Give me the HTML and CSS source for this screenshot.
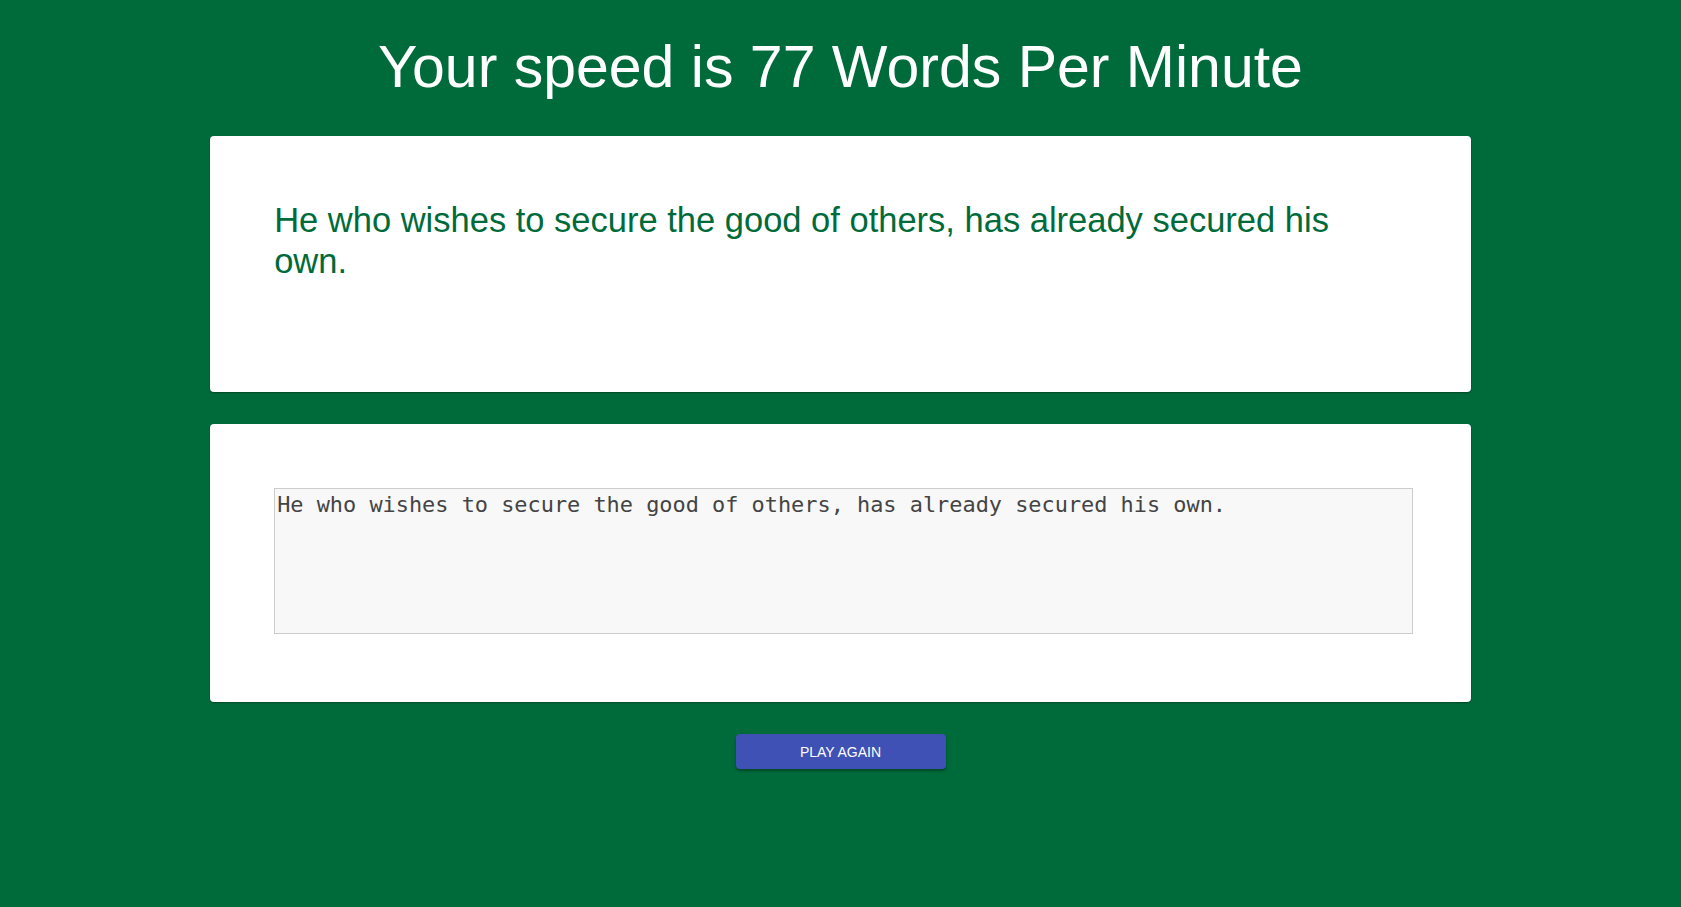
FILE: index.html
```html
<!DOCTYPE html>
<html>
<head>
<meta charset="utf-8">
<title>Typing Speed</title>
<link rel="stylesheet" href="styles.css">
</head>
<body>
<h1 class="title">Your speed is 77 Words Per Minute</h1>
<div class="card quote-card">
  <p class="quote">He who wishes to secure the good of others, has already secured his own.</p>
</div>
<div class="card input-card">
  <textarea class="typing" rows="5">He who wishes to secure the good of others, has already secured his own.</textarea>
</div>
<div class="actions">
  <button class="play-btn">PLAY AGAIN</button>
</div>
</body>
</html>
```

FILE: styles.css
```css
html, body {
  margin: 0;
  padding: 0;
}
body {
  background: #006b3a;
  font-family: "Liberation Sans", Arial, sans-serif;
  min-height: 907px;
}
.title {
  margin: 33px 0 34px;
  text-align: center;
  color: #ffffff;
  font-weight: normal;
  font-size: 59px;
  line-height: 69px;
}
.card {
  width: 75%;
  margin: 0 auto 32px;
  background: #ffffff;
  border-radius: 4px;
  box-shadow: 0 1px 2px rgba(0, 0, 0, 0.35);
  padding: 64px;
  box-sizing: border-box;
}
.quote-card {
  height: 256px;
}
.quote {
  margin: 0;
  color: #006b3a;
  font-size: 34.5px;
  line-height: 41px;
}
.input-card {
  height: 278px;
}
.typing {
  display: block;
  box-sizing: border-box;
  width: calc(100% + 6px);
  height: 146px;
  margin: 0;
  padding: 2px;
  border: 1px solid #cccccc;
  background: #f8f8f8;
  color: #444444;
  font-family: "DejaVu Sans Mono", "Liberation Mono", monospace;
  font-size: 21.9px;
  line-height: 28px;
  resize: none;
  outline: none;
}
.actions {
  display: flex;
  justify-content: center;
}
.play-btn {
  width: 210px;
  height: 35px;
  border: none;
  border-radius: 4px;
  background: #3f51b5;
  color: #ffffff;
  font-family: "Liberation Sans", Arial, sans-serif;
  font-size: 14px;
  box-shadow: 0 2px 3px rgba(0, 0, 0, 0.35);
  cursor: pointer;
}
```
